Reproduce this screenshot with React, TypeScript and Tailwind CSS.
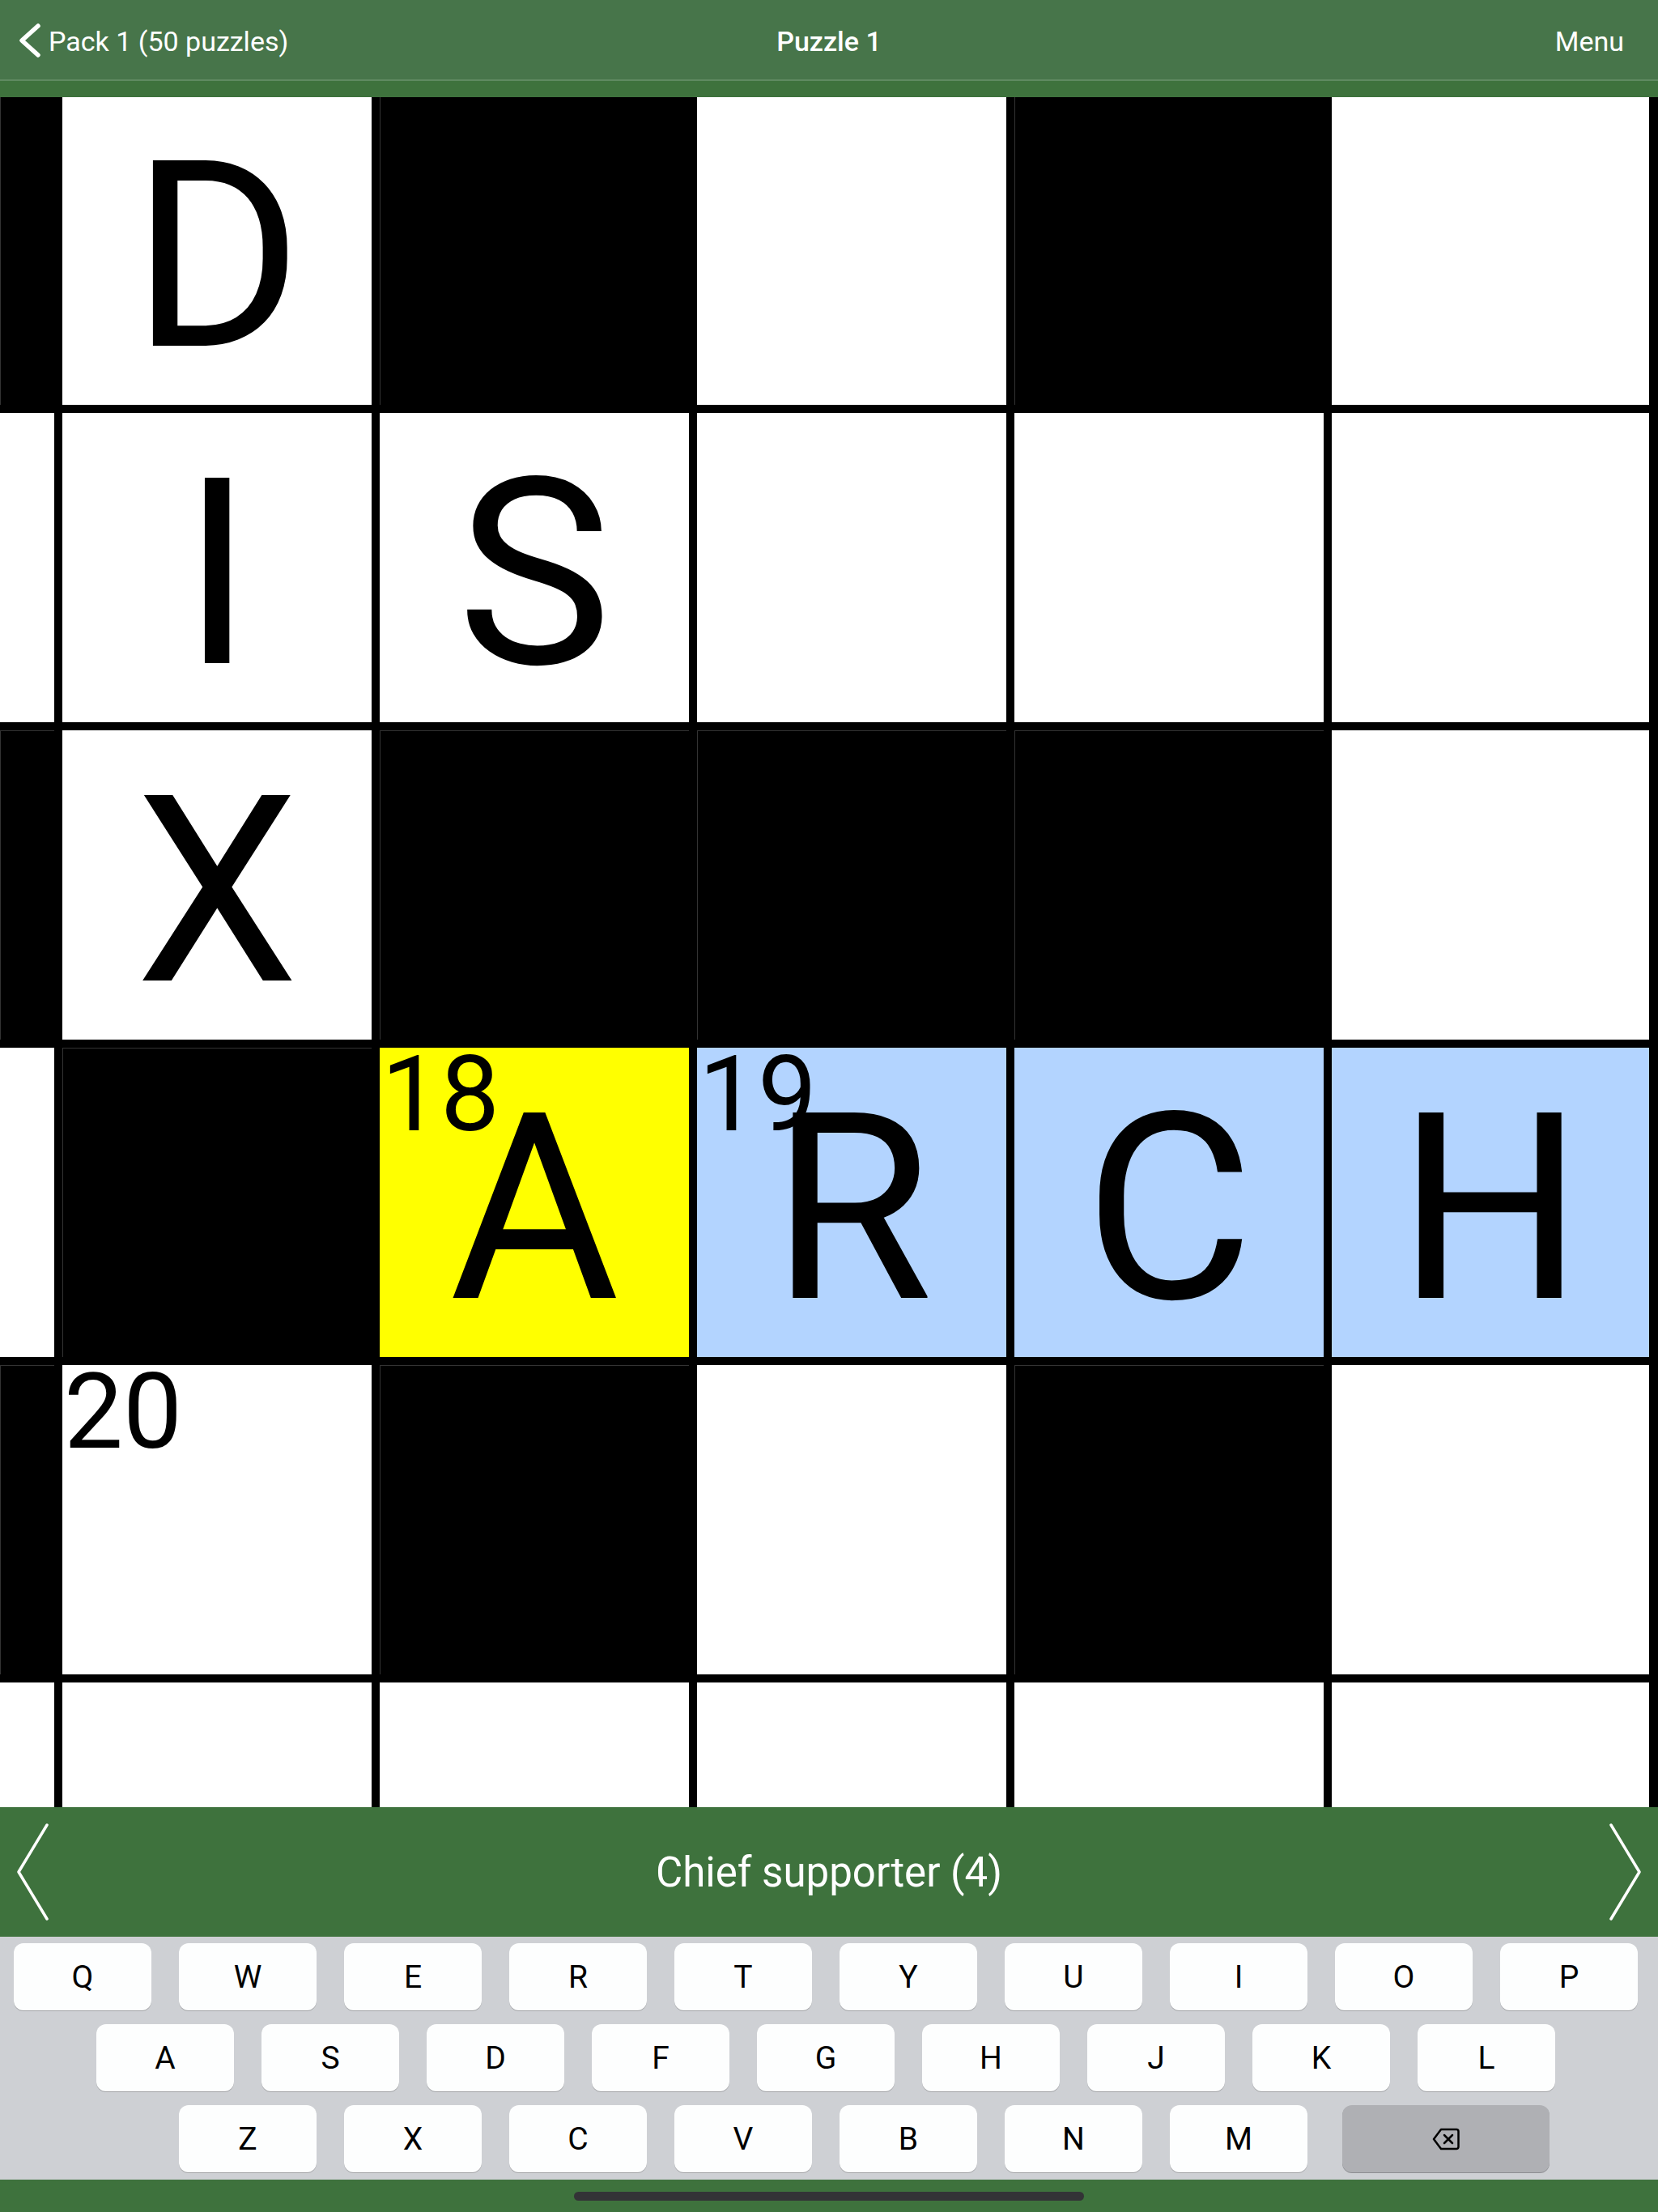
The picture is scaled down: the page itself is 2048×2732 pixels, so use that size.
type Cell = {
  kind: 'black' | 'white' | 'yellow' | 'blue';
  letter?: string;
  num?: string;
};

const b: Cell = { kind: 'black' };
const w: Cell = { kind: 'white' };

const rows: Cell[][] = [
  [b, { kind: 'white', letter: 'D' }, b, w, b, w],
  [w, { kind: 'white', letter: 'I' }, { kind: 'white', letter: 'S' }, w, w, w],
  [b, { kind: 'white', letter: 'X' }, b, b, b, w],
  [
    w,
    b,
    { kind: 'yellow', letter: 'A', num: '18' },
    { kind: 'blue', letter: 'R', num: '19' },
    { kind: 'blue', letter: 'C' },
    { kind: 'blue', letter: 'H' },
  ],
  [b, { kind: 'white', num: '20' }, b, w, b, w],
  [w, w, w, w, w, w],
];

const bgClass = {
  black: 'bg-black border-l border-t border-[#333333]',
  white: 'bg-white',
  yellow: 'bg-[#ffff00]',
  blue: 'bg-[#b3d4ff]',
};

function GridCell({ cell }: { cell: Cell }) {
  return (
    <div className={`relative flex items-center justify-center pt-[16px] ${bgClass[cell.kind]}`}>
      {cell.letter && <span className="text-[322px] leading-none text-black">{cell.letter}</span>}
      {cell.num && <span className="absolute left-[2px] top-[-7px] text-[130px] leading-[130px] text-black">{cell.num}</span>}
    </div>
  );
}

function Key({ label }: { label: string }) {
  return (
    <div className="flex h-[83px] w-[170px] items-center justify-center rounded-[12px] bg-[#fdfefe] pt-[2px] text-[39px] leading-none text-black shadow-[0_1px_0_#a0a1a4]">
      {label}
    </div>
  );
}

function KeyRow({ keys, className, children }: { keys: string; className: string; children?: React.ReactNode }) {
  return (
    <div className={`flex gap-[34px] ${className}`}>
      {keys.split('').map((k) => (
        <Key key={k} label={k} />
      ))}
      {children}
    </div>
  );
}

export default function App() {
  return (
    <div className="flex h-[2732px] w-[2048px] flex-col overflow-hidden bg-[#3e723d] font-['Roboto',sans-serif]">
      {/* Top bar */}
      <header className="h-[120px] shrink-0">
        <div className="grid h-[100px] grid-cols-3 items-center border-b-2 border-[#5f8a61] bg-[#47754a] text-[34px] text-white">
          <div className="flex items-center">
            <svg width="60" height="100" viewBox="0 0 60 100" fill="none" className="shrink-0">
              <path d="M47 32 L27 50 L47 68" stroke="white" strokeWidth="5.5" strokeLinecap="round" strokeLinejoin="round" />
            </svg>
            <span className="pt-[2px]">Pack 1 (50 puzzles)</span>
          </div>
          <div className="pt-[2px] text-center font-medium">Puzzle 1</div>
          <div className="pt-[2px] pr-[42px] text-right">Menu</div>
        </div>
      </header>

      {/* Crossword */}
      <main className="h-[2112px] shrink-0 overflow-hidden bg-black">
        <div className="-mt-[2px] grid grid-cols-[67px_382px_382px_382px_382px_392px] auto-rows-[382px] gap-[10px]">
          {rows.flatMap((row, r) => row.map((cell, c) => <GridCell key={`${r}-${c}`} cell={cell} />))}
        </div>
      </main>

      {/* Clue bar */}
      <div className="flex h-[160px] shrink-0 items-center justify-between bg-[#3e723d] px-[20px] text-white">
        <svg width="40" height="120" viewBox="0 0 40 120" fill="none">
          <path d="M38 2 L3 60 L38 118" stroke="white" strokeWidth="3.5" strokeLinecap="round" strokeLinejoin="round" />
        </svg>
        <div className="pt-[2px] text-[51px]">Chief supporter (4)</div>
        <svg width="40" height="120" viewBox="0 0 40 120" fill="none">
          <path d="M2 2 L37 60 L2 118" stroke="white" strokeWidth="3.5" strokeLinecap="round" strokeLinejoin="round" />
        </svg>
      </div>

      {/* Keyboard */}
      <div className="flex h-[300px] shrink-0 flex-col gap-[17px] bg-[#ced0d4] pt-[8px]">
        <KeyRow keys="QWERTYUIOP" className="pl-[17px]" />
        <KeyRow keys="ASDFGHJKL" className="pl-[119px]" />
        <KeyRow keys="ZXCVBNM" className="pl-[221px]">
          <div className="ml-[9px] flex h-[83px] w-[256px] items-center justify-center rounded-[12px] bg-[#afb0b4] shadow-[0_1px_0_#8d8e92]">
            <svg width="34" height="28" viewBox="0 0 34 28" fill="none" stroke="black" strokeWidth="2.5" strokeLinejoin="round" strokeLinecap="round">
              <path d="M11 2 H30 a2.5 2.5 0 0 1 2.5 2.5 V23.5 a2.5 2.5 0 0 1 -2.5 2.5 H11 L2 14 Z" />
              <path d="M15 9 L25 19 M25 9 L15 19" />
            </svg>
          </div>
        </KeyRow>
      </div>

      {/* Home indicator */}
      <div className="flex flex-1 items-center justify-center">
        <div className="h-[11px] w-[630px] rounded-full bg-[#333336]" />
      </div>
    </div>
  );
}
